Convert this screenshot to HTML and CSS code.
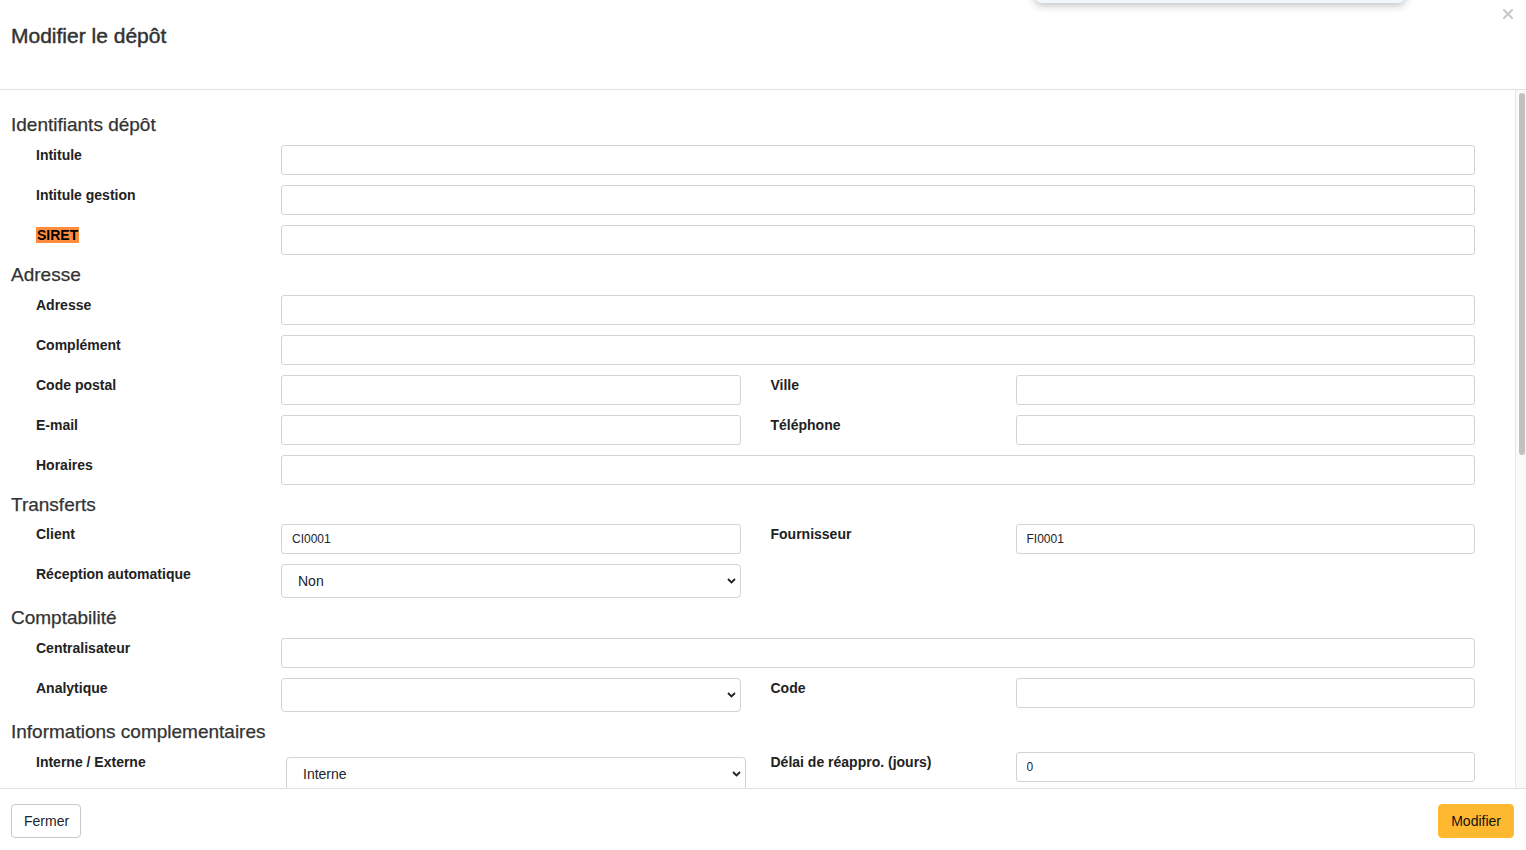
FILE: index.html
```html
<!DOCTYPE html>
<html lang="fr">
<head>
<meta charset="utf-8">
<title>Modifier le dépôt</title>
<link rel="stylesheet" href="styles.css">
</head>
<body>
<div class="toast"></div>
<div class="modal">
  <header class="modal-header">
    <h1 class="modal-title">Modifier le dépôt</h1>
    <button class="close" aria-label="Fermer">
      <svg width="10" height="10" viewBox="0 0 10 10"><path d="M1 1 L9 9 M9 1 L1 9" stroke="#c9c9c9" stroke-width="2.2" stroke-linecap="square"/></svg>
    </button>
  </header>
  <div class="modal-body">
    <div class="content">
      <h2 class="section">Identifiants dépôt</h2>
      <div class="row"><label class="lbl">Intitule</label><input class="field full" type="text"></div>
      <div class="row"><label class="lbl">Intitule gestion</label><input class="field full" type="text"></div>
      <div class="row"><label class="lbl"><span class="hl">SIRET</span></label><input class="field full" type="text"></div>

      <h2 class="section">Adresse</h2>
      <div class="row"><label class="lbl">Adresse</label><input class="field full" type="text"></div>
      <div class="row"><label class="lbl">Complément</label><input class="field full" type="text"></div>
      <div class="row"><label class="lbl">Code postal</label><input class="field" type="text"><label class="lbl lbl2">Ville</label><input class="field" type="text"></div>
      <div class="row"><label class="lbl">E-mail</label><input class="field" type="text"><label class="lbl lbl2">Téléphone</label><input class="field" type="text"></div>
      <div class="row"><label class="lbl">Horaires</label><input class="field full" type="text"></div>

      <h2 class="section sec-tight">Transferts</h2>
      <div class="row"><label class="lbl">Client</label><input class="field" type="text" value="CI0001"><label class="lbl lbl2">Fournisseur</label><input class="field" type="text" value="FI0001"></div>
      <div class="row"><label class="lbl">Réception automatique</label>
        <div class="sel"><select><option>Non</option><option>Oui</option></select><svg class="chev" width="9" height="6" viewBox="0 0 9 6"><path d="M1 1 L4.5 4.5 L8 1" fill="none" stroke="#222" stroke-width="1.8"/></svg></div>
      </div>

      <h2 class="section">Comptabilité</h2>
      <div class="row"><label class="lbl">Centralisateur</label><input class="field full" type="text"></div>
      <div class="row"><label class="lbl">Analytique</label>
        <div class="sel"><select><option></option></select><svg class="chev" width="9" height="6" viewBox="0 0 9 6"><path d="M1 1 L4.5 4.5 L8 1" fill="none" stroke="#222" stroke-width="1.8"/></svg></div>
        <label class="lbl lbl2">Code</label><input class="field" type="text">
      </div>

      <h2 class="section">Informations complementaires</h2>
      <div class="row"><label class="lbl">Interne / Externe</label>
        <div class="sel shifted"><select><option>Interne</option><option>Externe</option></select><svg class="chev" width="9" height="6" viewBox="0 0 9 6"><path d="M1 1 L4.5 4.5 L8 1" fill="none" stroke="#222" stroke-width="1.8"/></svg></div>
        <label class="lbl lbl2">Délai de réappro. (jours)</label><input class="field" type="text" value="0">
      </div>
    </div>
    <div class="scrollbar"><div class="thumb"></div></div>
  </div>
  <footer class="modal-footer">
    <button class="btn btn-light">Fermer</button>
    <button class="btn btn-warning">Modifier</button>
  </footer>
</div>
</body>
</html>
```
FILE: styles.css
```css
* { box-sizing: border-box; }
html, body { margin: 0; padding: 0; height: 100%; }
body {
  font-family: "Liberation Sans", Arial, sans-serif;
  color: #212529;
  background: #fff;
  overflow: hidden;
  position: relative;
}
.toast {
  position: absolute;
  left: 1035px;
  top: -20px;
  width: 370px;
  height: 23px;
  background: #eef8fa;
  border-radius: 6px;
  box-shadow: 0 2px 8px rgba(0,0,0,0.28);
  z-index: 5;
}
.modal {
  display: flex;
  flex-direction: column;
  height: 850px;
}
.modal-header {
  height: 90px;
  border-bottom: 1px solid #dee2e6;
  padding: 23px 11px 0;
  position: relative;
  flex: none;
}
.modal-title {
  margin: 0;
  font-size: 21px;
  line-height: 26px;
  font-weight: normal;
  color: #333;
  -webkit-text-stroke: 0.45px #333;
}
.close {
  position: absolute;
  top: 9px;
  right: 13px;
  border: 0;
  background: none;
  padding: 0;
  width: 10px;
  height: 10px;
  line-height: 0;
}
.modal-body {
  flex: 1;
  display: flex;
  min-height: 0;
  overflow: hidden;
}
.content {
  flex: 1;
  min-width: 0;
  overflow: hidden;
  padding: 25px 40px 0 11px;
}
.scrollbar {
  flex: none;
  width: 11px;
  background: #fafafa;
  border-left: 1px solid #e8e8e8;
  padding: 3px 1px 0 3px;
}
.thumb {
  height: 362px;
  background: #c1c1c1;
  border-radius: 4px;
}
.section {
  margin: 0 0 10px;
  font-size: 19px;
  line-height: 20px;
  font-weight: normal;
  color: #333;
  -webkit-text-stroke: 0.25px #333;
}
.sec-tight { margin-bottom: 9px; }
.row {
  display: grid;
  grid-template-columns: 245px 1fr 30px 245px 1fr;
  margin: 0 0 10px 25px;
  align-items: start;
}
.lbl {
  grid-column: 1;
  font-size: 14px;
  font-weight: bold;
  line-height: 20px;
  color: #222;
}
.lbl2 { grid-column: 4; }
.hl { background: #ff8b3d; color: #000; padding: 0 1px; }
.field {
  height: 30px;
  border: 1px solid #ced4da;
  border-radius: 3px;
  padding: 0 10px;
  font-family: "Liberation Sans", Arial, sans-serif;
  font-size: 12px;
  color: #212529;
  background: #fff;
  width: 100%;
  min-width: 0;
  outline: none;
}
.full { grid-column: 2 / 6; }
.sel {
  position: relative;
  grid-column: 2;
  height: 34px;
}
.sel.shifted { margin: 5px -5px 0 5px; }
.sel select {
  appearance: none;
  -webkit-appearance: none;
  width: 100%;
  height: 34px;
  border: 1px solid #ced4da;
  border-radius: 4px;
  background: #fff;
  padding: 0 16px;
  font-family: "Liberation Sans", Arial, sans-serif;
  font-size: 14px;
  color: #212529;
  outline: none;
}
.chev {
  position: absolute;
  right: 5px;
  top: 14px;
  pointer-events: none;
}
.modal-footer {
  flex: none;
  height: 62px;
  border-top: 1px solid #dee2e6;
  padding: 15px 12px 0 11px;
  display: flex;
  justify-content: space-between;
  align-items: flex-start;
}
.btn {
  height: 34px;
  border-radius: 4px;
  font-family: "Liberation Sans", Arial, sans-serif;
  font-size: 14px;
  line-height: 32px;
  padding: 0 12px;
  color: #212529;
  cursor: pointer;
  white-space: nowrap;
}
.btn-light {
  background: #fff;
  border: 1px solid #c8c8c8;
  padding: 0 11px 0 12px;
}
.btn-warning {
  background: #ffb931;
  border: 1px solid #ffb931;
  color: #111;
}
```
